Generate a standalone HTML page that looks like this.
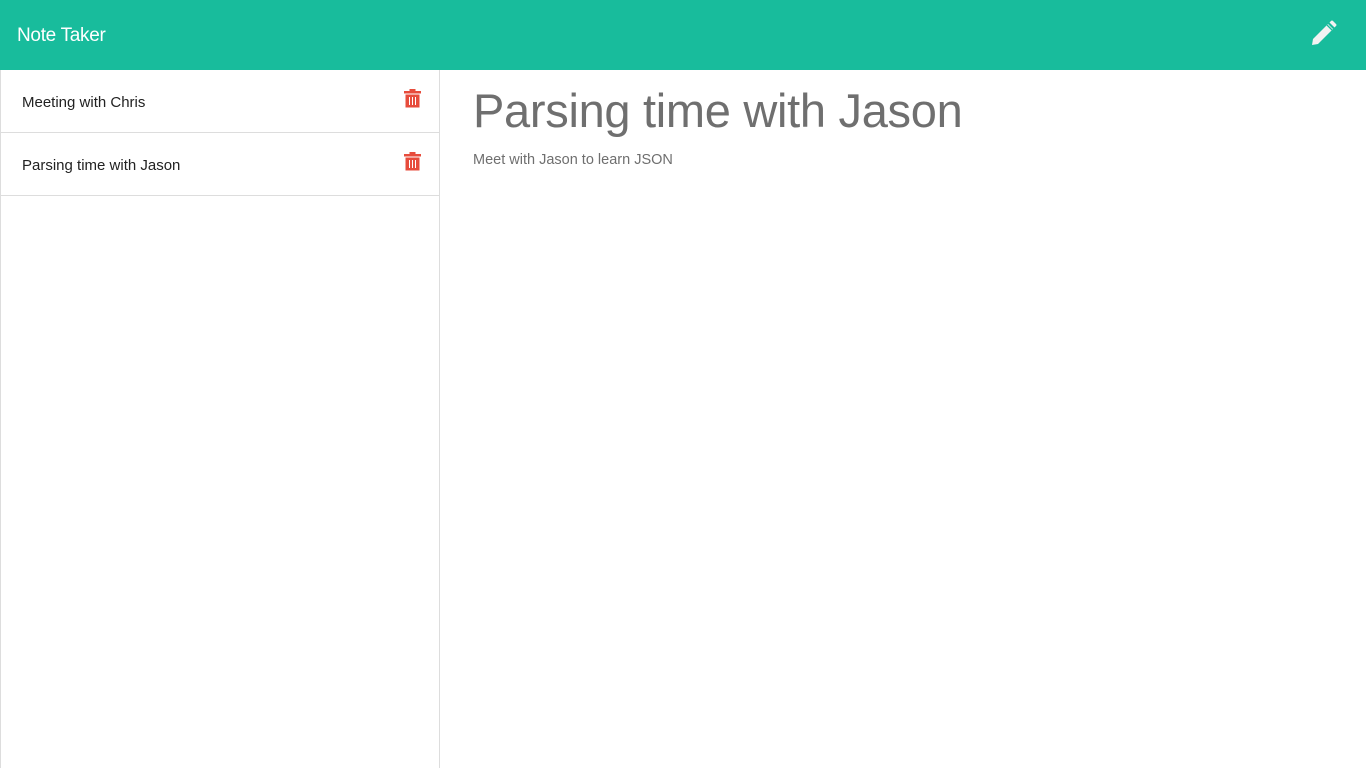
<!DOCTYPE html>
<html><head><style>
body{margin:0;width:1366px;height:768px;overflow:hidden;font-family:"Liberation Sans",sans-serif;background:#fff;position:relative}
.hdr{position:absolute;left:0;top:0;width:1366px;height:70px;background:#18bc9c}
.hdr .t{position:absolute;left:17px;top:25px;color:#fff;font-size:19px;letter-spacing:-0.3px}
.side{position:absolute;left:0;top:70px;width:438px;height:698px;border-left:1px solid #ddd;border-right:1px solid #ddd}
.item{position:relative;height:62px;border-bottom:1px solid #ddd;font-size:15px;color:#222}
.item span{position:absolute;left:21px;top:24px}
.item svg{position:absolute;left:403px;top:18px}
h1{position:absolute;left:473px;top:83px;margin:0;font-weight:normal;font-size:47px;color:#6f6f6f;letter-spacing:-0.3px}
p{position:absolute;left:473px;top:152px;margin:0;font-size:14.5px;color:#6f6f6f}
</style></head><body>
<div class="hdr"><div class="t">Note Taker</div>
<svg style="position:absolute;left:1309px;top:20px" width="28" height="28" viewBox="0 0 28 28"><path d="M3 25 L4 19 L19 4 L24 9 L9 24 Z" fill="#f2f2f2"/><path d="M20.5 2.5 L22 1 Q23 0 24 1 L27 4 Q28 5 27 6 L25.5 7.5 Z" fill="#f2f2f2"/><line x1="18" y1="5" x2="23" y2="10" stroke="#18bc9c" stroke-width="1.3"/></svg>
</div>
<div class="side">
<div class="item"><span>Meeting with Chris</span><svg width="17" height="20" viewBox="0 0 17 20"><rect x="0" y="3" width="17" height="2.5" fill="#e74c3c"/><rect x="5.5" y="1" width="6" height="2.5" fill="#e74c3c"/><rect x="1.5" y="6.5" width="14" height="13" fill="#e74c3c"/><g stroke="#fff" stroke-width="1"><line x1="5.5" y1="9" x2="5.5" y2="17"/><line x1="8.5" y1="9" x2="8.5" y2="17"/><line x1="11.5" y1="9" x2="11.5" y2="17"/></g></svg></div>
<div class="item"><span>Parsing time with Jason</span><svg width="17" height="20" viewBox="0 0 17 20"><rect x="0" y="3" width="17" height="2.5" fill="#e74c3c"/><rect x="5.5" y="1" width="6" height="2.5" fill="#e74c3c"/><rect x="1.5" y="6.5" width="14" height="13" fill="#e74c3c"/><g stroke="#fff" stroke-width="1"><line x1="5.5" y1="9" x2="5.5" y2="17"/><line x1="8.5" y1="9" x2="8.5" y2="17"/><line x1="11.5" y1="9" x2="11.5" y2="17"/></g></svg></div>
</div>
<h1>Parsing time with Jason</h1>
<p>Meet with Jason to learn JSON</p>
</body></html>
